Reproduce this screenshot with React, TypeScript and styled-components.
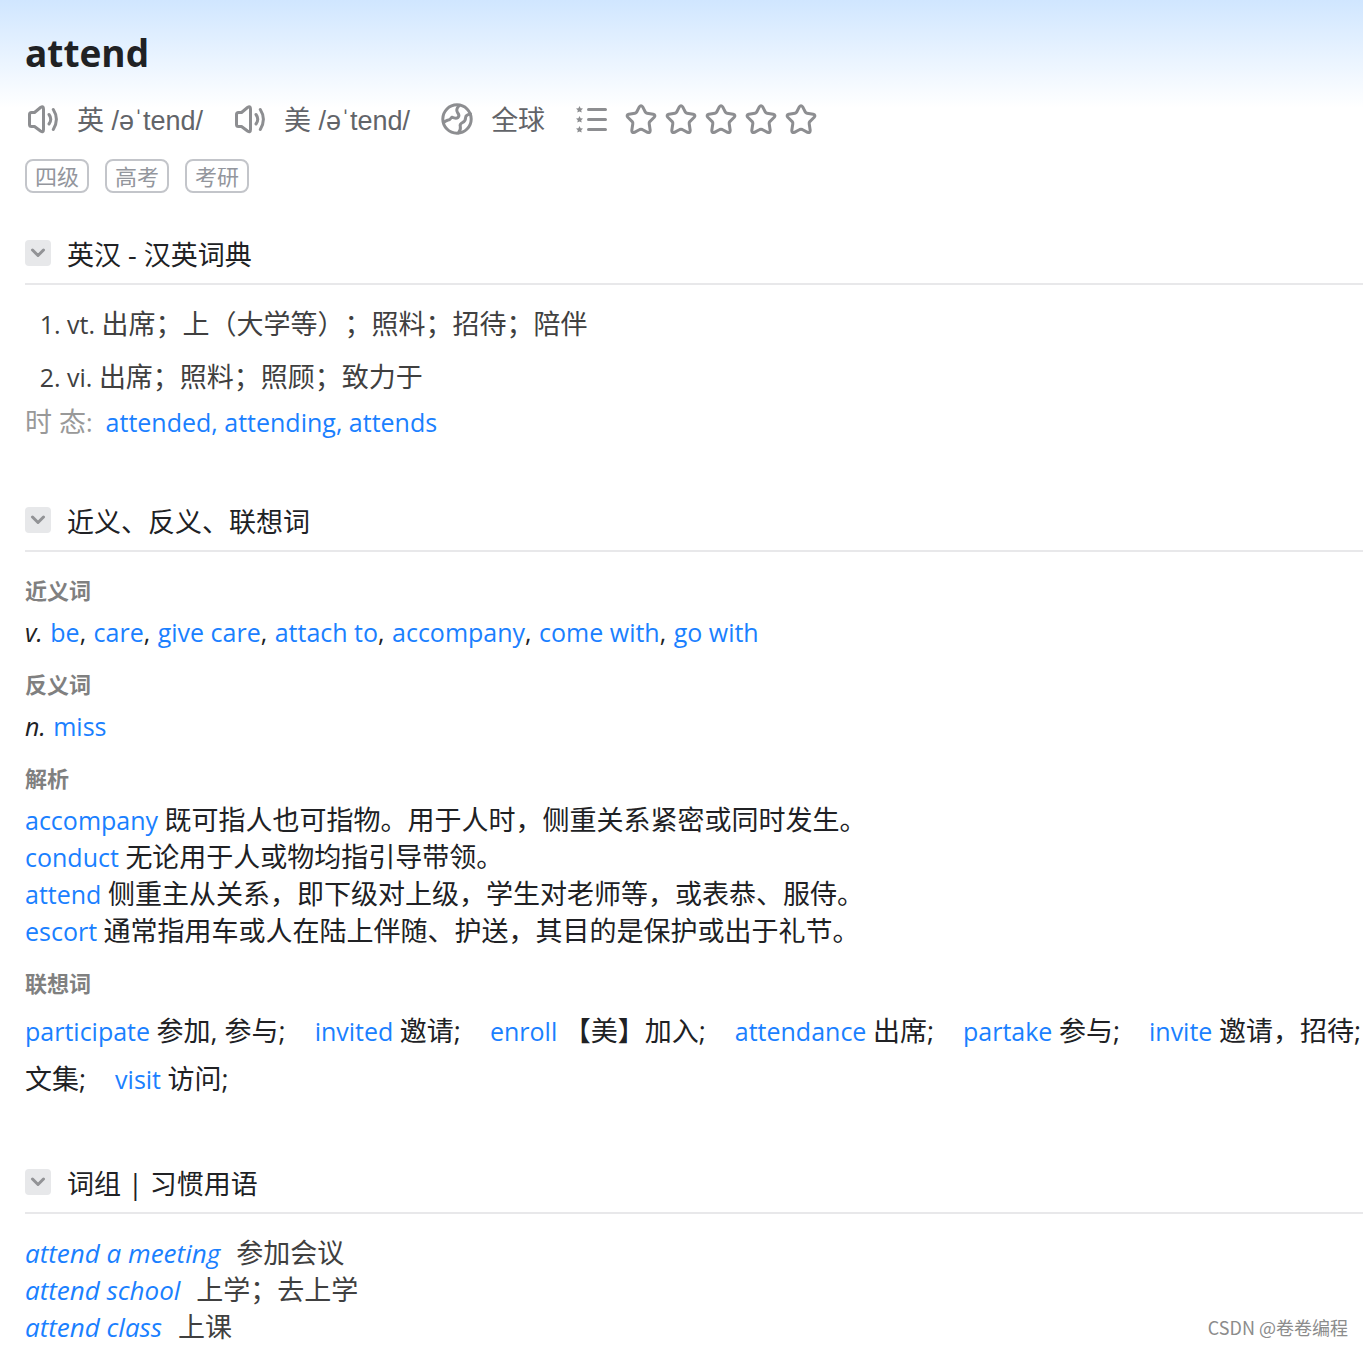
import React from "react";
import styled, { createGlobalStyle } from "styled-components";

const GlobalStyle = createGlobalStyle`
  * { box-sizing: border-box; }
  body {
    margin: 0;
    background: #fff;
    color: #202124;
    font-family: "Open Sans", "Noto Sans CJK SC", sans-serif;
    font-size: 25px;
    line-height: 37px;
    text-spacing-trim: space-all;
    overflow-x: hidden;
  }
  button {
    border: 0;
    padding: 0;
    background: none;
    font: inherit;
    color: inherit;
    cursor: pointer;
  }
`;

const Page = styled.main`
  position: relative;
  padding: 25px 0 0 25px;
  background: linear-gradient(#d0e6ff, #ffffff) 0 0 / 100% 108px no-repeat;
`;

const Word = styled.h1`
  margin: 0 0 21px;
  font-size: 37px;
  font-weight: 700;
  line-height: 56px;
`;

const SoundRow = styled.div`
  display: flex;
  align-items: center;
  height: 36px;
  color: #626469;
  font-family: "Liberation Sans", "Noto Sans CJK SC", sans-serif;
  font-size: 27px;
`;

const SoundButton = styled.button`
  display: flex;
  align-items: center;
  gap: 16px;
  margin-right: 29px;
`;

const SoundLabel = styled.span`
  padding-top: 2px;
`;

const Icon = styled.svg`
  display: block;
  flex: none;
  width: 36px;
  height: 36px;
  fill: none;
  stroke: #8d8e91;
  stroke-width: 3;
  stroke-linecap: round;
  stroke-linejoin: round;
`;

const Stars = styled.div`
  display: flex;
  gap: 4px;
`;

const ListButton = styled.button`
  margin-right: 13px;
`;

const Tags = styled.ul`
  display: flex;
  gap: 16px;
  margin: 21px 0 0;
  padding: 0;
  list-style: none;
`;

const Tag = styled.li`
  padding: 0 8px;
  border: 2px solid #c3c5ca;
  border-radius: 8px;
  color: #93969d;
  font-size: 22px;
  line-height: 30px;
`;

const Section = styled.section<{ $first?: boolean }>`
  margin-top: ${(p) => (p.$first ? 43 : 62)}px;
`;

const SectionHead = styled.header`
  display: flex;
  align-items: flex-start;
  gap: 16px;
  padding-bottom: 10px;
  border-bottom: 2px solid #e8e8ea;
  margin-bottom: 21px;
`;

const Fold = styled.button`
  display: grid;
  place-items: center;
  width: 26px;
  height: 26px;
  margin-top: 4px;
  border-radius: 4px;
  background: #e7e8ea;
`;

const SectionTitle = styled.h2`
  margin: 0;
  font-size: 27px;
  font-weight: 400;
  line-height: 37px;
`;

const Senses = styled.ol`
  display: grid;
  gap: 16px;
  margin: 0 0 8px;
  padding-left: 42px;
  color: #404040;
`;

const Zh = styled.span`
  font-size: 27px;
  line-height: 1;
`;

const Tense = styled.p`
  margin: 0;
  color: #999;
`;

const Link = styled.a`
  color: #1a80ff;
  text-decoration: none;
`;

const TenseLinks = styled.span`
  margin-left: 13px;
  color: #1a80ff;
`;

const Group = styled.div`
  & + & { margin-top: 16px; }
`;

const GroupTitle = styled.h3`
  margin: 0 0 6px;
  color: #808080;
  font-size: 22px;
  font-weight: 700;
  line-height: 35px;
`;

const Line = styled.p`
  margin: 0;
`;

const WordLine = styled(Line)`
  ${Link} { margin-left: 1px; }
`;

const Related = styled.div`
  display: flex;
  flex-wrap: wrap;
  column-gap: 29px;
  line-height: 48px;
`;

const RelatedItem = styled.span`
  white-space: nowrap;
`;

const Phrase = styled.p`
  margin: 0;
  color: #404040;
`;

const PhraseLink = styled(Link)`
  margin-right: 16px;
  font-size: 26px;
  font-style: italic;
  line-height: 1;
`;

const Watermark = styled.span`
  position: absolute;
  right: 15px;
  bottom: 0;
  color: #8c8c8c;
  font-family: "Noto Sans CJK SC", sans-serif;
  font-size: 18px;
  text-shadow: 0 0 1px #fff;
`;

const Speaker = () => (
  <Icon viewBox="0 0 36 36" aria-hidden="true">
    <path d="M4.500 12.500Q4.500 10.500 6.500 10.500H9.500L15.500 5.500Q18.500 3.500 18.500 7V27.500Q18.500 31 15.500 29L9.500 24.500H6.500Q4.500 24.500 4.500 22.500Z" />
    <path d="M24 12.500Q27.500 17.200 24 22M28.300 7.500Q34.500 17.200 28.300 27.500" />
  </Icon>
);

const Globe = () => (
  <Icon viewBox="0 0 36 36" aria-hidden="true">
    <circle cx="18" cy="17" r="14.200" />
    <path d="M19.800 4Q16.500 7.500 18.500 10.500Q21 13.500 19 15.500Q17 17 12.800 15.200Q11 18 8.500 18.200Q6 19 4.800 20.500" />
    <path d="M31.500 12Q26.800 12.800 26.600 15.500Q26.500 19.500 23.500 20.500Q20.500 22 21.300 24.500Q22 28 19.500 30.800" />
  </Icon>
);

const miniStar = "l1.100 2.200 2.400.300-1.800 1.700.500 2.400-2.200-1.200-2.200 1.200.500-2.400-1.800-1.700 2.400-.300z";

const ListIcon = () => (
  <Icon viewBox="0 0 36 36" aria-hidden="true">
    <path d="M14.500 7.500H31.500M14.500 17.500H31.500M14.500 27.500H31.500" />
    {[4, 14, 24].map((y) => (
      <path key={y} d={`M5.500 ${y}${miniStar}`} fill="#8d8e91" stroke="none" />
    ))}
  </Icon>
);

const Star = () => (
  <Icon viewBox="0 0 36 36" aria-hidden="true">
    <path
      d="M16.300 4.900Q18 2.800 19.700 4.900L22.300 10Q22.800 11 24 11.200L30.200 12.300Q33 13 31.200 15.300L26.800 19.600Q26 20.500 26.200 21.700L27.200 28.200Q27.300 31.200 24.500 30.300L19.200 27.500Q18 27 16.800 27.500L11.500 30.300Q8.700 31.200 8.800 28.200L9.800 21.700Q10 20.500 9.200 19.600L4.800 15.300Q3 13 5.800 12.300L12 11.200Q13.200 11 13.700 10Z"
    />
  </Icon>
);

const Head = ({ children }: { children: string }) => (
  <SectionHead>
    <Fold aria-label={children}>
      <svg width="16" height="10" viewBox="0 0 16 10" fill="none" stroke="#929396" strokeWidth="3" strokeLinecap="round" strokeLinejoin="round" aria-hidden="true">
        <path d="M2.500 2L8 7.500L13.500 2" />
      </svg>
    </Fold>
    <SectionTitle>{children}</SectionTitle>
  </SectionHead>
);

const synonyms = ["be", "care", "give care", "attach to", "accompany", "come with", "go with"];

const analysis = [
  ["accompany", "既可指人也可指物。用于人时，侧重关系紧密或同时发生。"],
  ["conduct", "无论用于人或物均指引导带领。"],
  ["attend", "侧重主从关系，即下级对上级，学生对老师等，或表恭、服侍。"],
  ["escort", "通常指用车或人在陆上伴随、护送，其目的是保护或出于礼节。"],
];

const related = [
  ["participate", "参加, 参与;"],
  ["invited", "邀请;"],
  ["enroll", "【美】加入;"],
  ["attendance", "出席;"],
  ["partake", "参与;"],
  ["invite", "邀请，招待;"],
  ["", "文集;"],
  ["visit", "访问;"],
];

const phrases = [
  ["attend a meeting", "参加会议"],
  ["attend school", "上学；去上学"],
  ["attend class", "上课"],
];

export default function App() {
  return (
    <>
      <GlobalStyle />
      <Page lang="zh-CN">
        <Word>attend</Word>
        <SoundRow>
          <SoundButton><Speaker /><SoundLabel>英 /əˈtend/</SoundLabel></SoundButton>
          <SoundButton><Speaker /><SoundLabel>美 /əˈtend/</SoundLabel></SoundButton>
          <SoundButton><Globe /><SoundLabel>全球</SoundLabel></SoundButton>
          <ListButton aria-label="list"><ListIcon /></ListButton>
          <Stars>
            {[1, 2, 3, 4, 5].map((n) => (
              <button key={n} aria-label={`${n}`}><Star /></button>
            ))}
          </Stars>
        </SoundRow>
        <Tags>
          {["四级", "高考", "考研"].map((t) => <Tag key={t}>{t}</Tag>)}
        </Tags>

        <Section $first>
          <Head>英汉 - 汉英词典</Head>
          <Senses>
            <li>vt. <Zh>出席；上（大学等）；照料；招待；陪伴</Zh></li>
            <li>vi. <Zh>出席；照料；照顾；致力于</Zh></li>
          </Senses>
          <Tense>
            <Zh>时 态</Zh>:
            <TenseLinks>
              <Link href="#attended">attended</Link>, <Link href="#attending">attending</Link>, <Link href="#attends">attends</Link>
            </TenseLinks>
          </Tense>
        </Section>

        <Section>
          <Head>近义、反义、联想词</Head>
          <Group>
            <GroupTitle>近义词</GroupTitle>
            <WordLine>
              <i>v.</i>{" "}
              {synonyms.map((s, i) => (
                <React.Fragment key={s}>{i > 0 && ", "}<Link href="#word">{s}</Link></React.Fragment>
              ))}
            </WordLine>
          </Group>
          <Group>
            <GroupTitle>反义词</GroupTitle>
            <WordLine><i>n.</i> <Link href="#word">miss</Link></WordLine>
          </Group>
          <Group>
            <GroupTitle>解析</GroupTitle>
            {analysis.map(([w, t]) => (
              <Line key={w}><Link href="#word">{w}</Link> <Zh>{t}</Zh></Line>
            ))}
          </Group>
          <Group>
            <GroupTitle>联想词</GroupTitle>
            <Related>
              {related.map(([w, t]) => (
                <RelatedItem key={t + w}>
                  {w && <><Link href="#word">{w}</Link>{" "}</>}
                  <Zh>{t}</Zh>
                </RelatedItem>
              ))}
            </Related>
          </Group>
        </Section>

        <Section>
          <Head>词组 | 习惯用语</Head>
          {phrases.map(([w, t]) => (
            <Phrase key={w}><PhraseLink href="#phrase">{w}</PhraseLink><Zh>{t}</Zh></Phrase>
          ))}
        </Section>
        <Watermark>CSDN @卷卷编程</Watermark>
      </Page>
    </>
  );
}
